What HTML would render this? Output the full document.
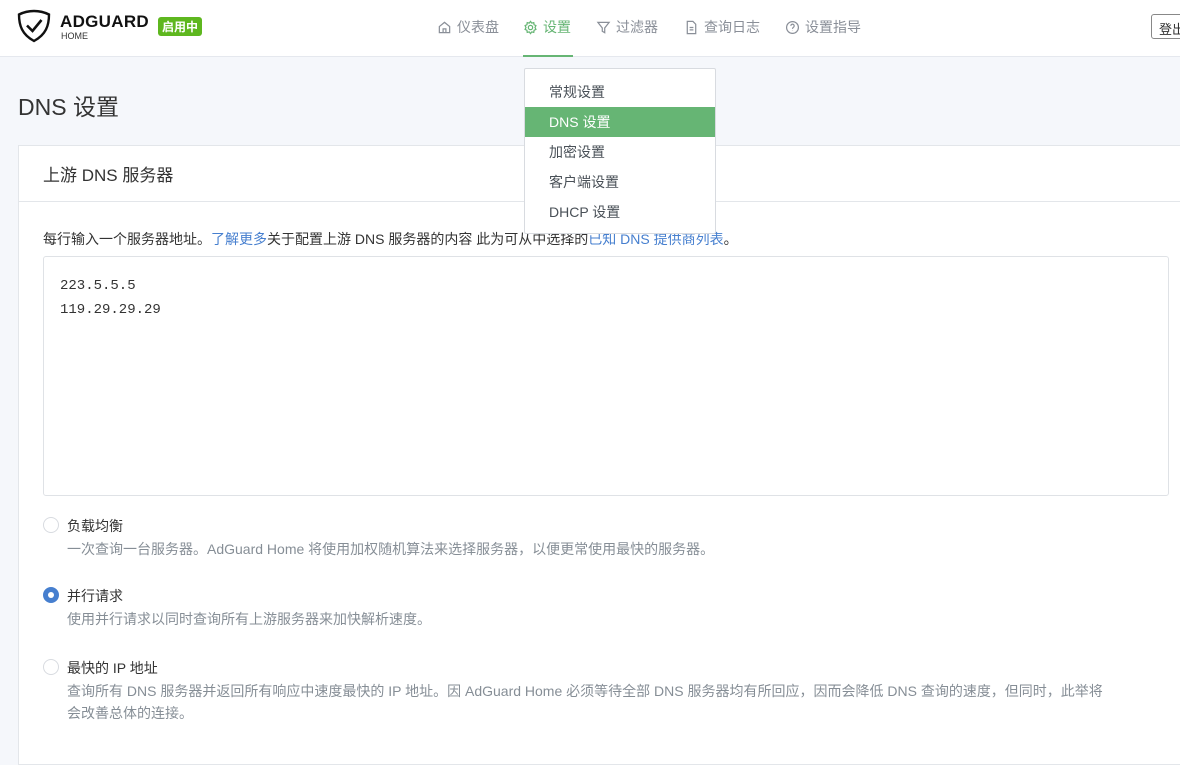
<!DOCTYPE html>
<html><head><meta charset="utf-8"><style>
*{box-sizing:border-box;margin:0;padding:0}
body{width:1180px;height:748px;overflow:hidden;background:#f5f7fb;font-family:"Liberation Sans","Noto Sans CJK SC",sans-serif;color:#495057;font-size:14px;position:relative}
.hdr{position:absolute;left:0;top:0;width:1180px;height:57px;background:#fff;border-bottom:1px solid #e5e8ee}
.nav{position:absolute;top:17px;font-size:14px;color:#8a8f98;display:flex;align-items:center;gap:5px}
.nav svg{width:15px;height:15px}
.title{position:absolute;left:18px;top:88px;font-size:23px;color:#333}
.card{position:absolute;left:18px;top:145px;width:1170px;height:620px;background:#fff;border:1px solid #e3e6ea}
.ch{height:56px;border-bottom:1px solid #e3e6ea;padding:15px 24px;font-size:17px;color:#333}
.ta{position:absolute;left:24px;top:110px;width:1126px;height:240px;border:1px solid #dfe2e6;border-radius:3px;padding:17px 16px;font-family:"Liberation Mono",monospace;font-size:14px;line-height:24px;color:#333}
.opt{position:absolute;left:24px}
.rad{position:absolute;left:0;top:1px;width:16px;height:16px;border-radius:50%;border:1px solid #d8dbe0;background:#fff}
.rad.on{background:#467fcf;border-color:#467fcf}
.rad.on:after{content:"";position:absolute;left:4px;top:4px;width:6px;height:6px;border-radius:50%;background:#fff}
.ol{margin-left:24px;color:#333;font-size:14px}
.od{margin-left:24px;color:#868e96;font-size:14px;margin-top:2px;line-height:22px;width:1085px}
.dd{position:absolute;left:524px;top:68px;width:192px;height:166px;background:#fff;border:1px solid #d8dbe0;border-radius:2px;padding-top:8px}
.dd div{height:30px;line-height:30px;padding-left:24px;color:#495057;font-size:14px}
.dd .act{background:#66b574;color:#fff}
</style></head><body>
<div class="hdr">
<svg style="position:absolute;left:17px;top:9px" width="34" height="34" viewBox="0 0 34 34"><path d="M17 2C11 2 6 3.5 2 5.5c0 11 3 20 15 26.5C29 25.5 32 16.5 32 5.5 28 3.5 23 2 17 2z" fill="none" stroke="#111" stroke-width="2.4"/><path d="M10 16.5l5.5 5.5 9-11" fill="none" stroke="#111" stroke-width="2.6"/></svg>
<div style="position:absolute;left:60px;top:12px;font-weight:bold;font-size:17px;color:#111;letter-spacing:.3px">ADGUARD</div>
<div style="position:absolute;left:61px;top:31px;font-size:9px;color:#333">HOME</div>
<div style="position:absolute;left:158px;top:17px;background:#5eb71f;color:#fff;font-size:12px;font-weight:bold;padding:1px 4px;border-radius:3px">启用中</div>
<div class="nav" style="left:437px"><svg viewBox="0 0 16 16" fill="none" stroke="#8a8f98" stroke-width="1.3"><path d="M2.5 7L8 2.5 13.5 7v6.5h-11z M6.5 13.5V9.5h3v4"/></svg>仪表盘</div>
<div class="nav" style="left:523px;color:#66b574"><svg viewBox="0 0 16 16" fill="none" stroke="#66b574" stroke-width="1.3"><circle cx="8" cy="8" r="2.3"/><path d="M8 1.5l1.3 1.8 2.2-.5.3 2.2 2 1-1 2 1 2-2 1-.3 2.2-2.2-.5L8 14.5l-1.3-1.8-2.2.5-.3-2.2-2-1 1-2-1-2 2-1 .3-2.2 2.2.5z"/></svg>设置</div>
<div style="position:absolute;left:523px;top:55px;width:50px;height:2px;background:#66b574"></div>
<div class="nav" style="left:596px"><svg viewBox="0 0 16 16" fill="none" stroke="#8a8f98" stroke-width="1.3"><path d="M2 2.5h12L9.3 8.5v5l-2.6-1.5V8.5z"/></svg>过滤器</div>
<div class="nav" style="left:684px"><svg viewBox="0 0 16 16" fill="none" stroke="#8a8f98" stroke-width="1.3"><path d="M3.5 1.5h6l3 3v10h-9z M6 8h4 M6 10.5h4"/></svg>查询日志</div>
<div class="nav" style="left:785px"><svg viewBox="0 0 16 16" fill="none" stroke="#8a8f98" stroke-width="1.3"><circle cx="8" cy="8" r="6.3"/><path d="M6.2 6.2a1.8 1.8 0 113 1.4c-.8.5-1.2.9-1.2 1.8 M8 11.3v.3"/></svg>设置指导</div>
<div style="position:absolute;left:1151px;top:14px;width:48px;height:25px;border:1px solid #888;border-radius:3px;font-size:13px;padding:4px 7px;color:#333;white-space:nowrap">登出</div>
</div>
<div class="title">DNS 设置</div>
<div class="card">
<div class="ch">上游 DNS 服务器</div>
<div style="position:absolute;left:24px;top:83px;font-size:14px;color:#333">每行输入一个服务器地址。<span style="color:#467fcf">了解更多</span>关于配置上游 DNS 服务器的内容 此为可从中选择的<span style="color:#467fcf">已知 DNS 提供商列表</span>。</div>
<div class="ta">223.5.5.5<br>119.29.29.29</div>
<div class="opt" style="top:370px"><div class="rad"></div><div class="ol">负载均衡</div><div class="od">一次查询一台服务器。AdGuard Home 将使用加权随机算法来选择服务器，以便更常使用最快的服务器。</div></div>
<div class="opt" style="top:440px"><div class="rad on"></div><div class="ol">并行请求</div><div class="od">使用并行请求以同时查询所有上游服务器来加快解析速度。</div></div>
<div class="opt" style="top:512px"><div class="rad"></div><div class="ol">最快的 IP 地址</div><div class="od">查询所有 DNS 服务器并返回所有响应中速度最快的 IP 地址。因 AdGuard Home 必须等待全部 DNS 服务器均有所回应，因而会降低 DNS 查询的速度，但同时，此举将<br>会改善总体的连接。</div></div>
</div>
<div class="dd"><div>常规设置</div><div class="act">DNS 设置</div><div>加密设置</div><div>客户端设置</div><div>DHCP 设置</div></div>
</body></html>
